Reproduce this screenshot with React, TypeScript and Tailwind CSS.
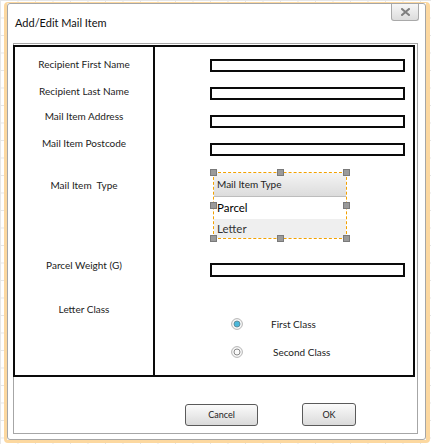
import React from "react";

const font = { fontFamily: "Lato, 'Liberation Sans', sans-serif" };

function Handle({ cls }: { cls: string }) {
  return <div className={`absolute w-[7px] h-[7px] bg-[#9a9a9a] border border-[#7a7a7a] ${cls}`} />;
}

function Radio({ checked }: { checked: boolean }) {
  return (
    <svg width="12" height="12" viewBox="0 0 12 12">
      <circle cx="6" cy="6" r="5.4" fill="#f6f6f6" stroke="#b4b4b4" strokeWidth="1" />
      {checked ? (
        <circle cx="6" cy="6" r="3" fill="#4bb8da" stroke="#5a7f8c" strokeWidth="0.8" />
      ) : (
        <circle cx="6" cy="6" r="3" fill="#fafafa" stroke="#8a8a8a" strokeWidth="1" />
      )}
    </svg>
  );
}

export default function App() {
  const labels: { t: string; mt: string }[] = [
    { t: "Recipient First Name", mt: "mt-[11px]" },
    { t: "Recipient Last Name", mt: "mt-[15px]" },
    { t: "Mail Item Address", mt: "mt-[13px]" },
    { t: "Mail Item Postcode", mt: "mt-[15px]" },
    { t: "Mail Item  Type", mt: "mt-[30px]" },
    { t: "Parcel Weight (G)", mt: "mt-[68px]" },
    { t: "Letter Class", mt: "mt-[32px]" },
  ];
  return (
    <div
      className="w-[431px] h-[444px] bg-white pl-[4px] pt-[2px] overflow-hidden bg-[linear-gradient(to_right,#e6e6e6_1px,transparent_1px),linear-gradient(to_bottom,#e6e6e6_1px,transparent_1px)] [background-size:17.5px_17.5px]"
      style={font}
    >
      <div className="w-[426px] h-[441px] border-l-[3px] border-r-[4px] border-b-[3px] border-t-[1px] border-[#fcd8a0] rounded-[4px]">
        <div className="w-full h-full border border-[#a6a6a6] rounded-[3px] bg-white flex flex-col">
          {/* header */}
          <div className="h-[39px] flex justify-between items-start">
            <div className="mt-[12px] ml-[7px] text-[11px] leading-[13px] text-[#111]">Add/Edit Mail Item</div>
            <div className="mr-[6px] w-[28px] h-[17px] border border-[#a9a9a9] border-t-0 rounded-b-[3px] bg-[linear-gradient(to_bottom,#f7f7f7,#dcdcdc)] flex items-center justify-center">
              <svg width="9" height="8" viewBox="0 0 9 8">
                <path d="M1 1 L8 7 M8 1 L1 7" stroke="#7f7f7f" strokeWidth="2" strokeLinecap="square" />
              </svg>
            </div>
          </div>
          {/* inner panel */}
          <div className="ml-[5px] w-[405px] h-[391px] border border-[#a6a6a6] flex flex-col">
            <div className="ml-[-1px] mt-[1px] w-[402px] h-[332px] border-2 border-[#0a0a0a] grid grid-cols-[140px_1fr]">
              <div className="border-r-2 border-[#0a0a0a] flex flex-col items-center text-[10px] leading-[12px] text-[#222]">
                {labels.map((l) => (
                  <div key={l.t} className={`${l.mt} whitespace-pre`}>
                    {l.t}
                  </div>
                ))}
              </div>
              <div className="flex flex-col pl-[55px] pt-[12px]">
                {[0, 1, 2, 3].map((i) => (
                  <div key={i} className={`w-[195px] h-[13px] border-2 border-[#0a0a0a] ${i > 0 ? "mt-[15px]" : ""}`} />
                ))}
                <div className="relative mt-[16px] ml-[3px] w-[134px] h-[67px] border border-dashed border-[#f2a100]">
                  <div className="h-[24px] bg-[linear-gradient(to_bottom,#f4f4f4,#dcdcdc)] border-b border-[#bdbdbd] flex items-center pl-[3px] text-[10px] text-[#222]">
                    Mail Item Type
                  </div>
                  <div className="h-[22px] bg-white flex items-center pl-[3px] text-[11.5px] text-black">Parcel</div>
                  <div className="h-[19px] bg-[#efefef] flex items-center pl-[3px] text-[11.5px] text-[#333]">Letter</div>
                  <Handle cls="left-[-4px] top-[-4px]" />
                  <Handle cls="left-[63px] top-[-4px]" />
                  <Handle cls="right-[-4px] top-[-4px]" />
                  <Handle cls="left-[-4px] top-[29px]" />
                  <Handle cls="right-[-4px] top-[29px]" />
                  <Handle cls="left-[-4px] bottom-[-4px]" />
                  <Handle cls="left-[63px] bottom-[-4px]" />
                  <Handle cls="right-[-4px] bottom-[-4px]" />
                </div>
                <div className="mt-[24px] w-[195px] h-[14px] border-2 border-[#0a0a0a]" />
                <div className="mt-[41px] h-[12px] flex items-center text-[10px] text-[#222]">
                  <div className="ml-[21px]">
                    <Radio checked />
                  </div>
                  <span className="ml-[28px]">First Class</span>
                </div>
                <div className="mt-[16px] h-[12px] flex items-center text-[10px] text-[#222]">
                  <div className="ml-[21px]">
                    <Radio checked={false} />
                  </div>
                  <span className="ml-[30px]">Second Class</span>
                </div>
              </div>
            </div>
            <div className="flex items-start mt-[26px] ml-[171px]">
              <div className="mt-[1px] w-[73px] h-[22px] border border-[#5a5a5a] rounded-[3px] bg-[linear-gradient(to_bottom,#fbfbfb,#dadada)] flex items-center justify-center text-[9px] text-[#222]">
                Cancel
              </div>
              <div className="ml-[44px] w-[54px] h-[23px] border border-[#5a5a5a] rounded-[3px] bg-[linear-gradient(to_bottom,#fbfbfb,#dadada)] flex items-center justify-center text-[9px] text-[#222]">
                OK
              </div>
            </div>
          </div>
        </div>
      </div>
    </div>
  );
}
